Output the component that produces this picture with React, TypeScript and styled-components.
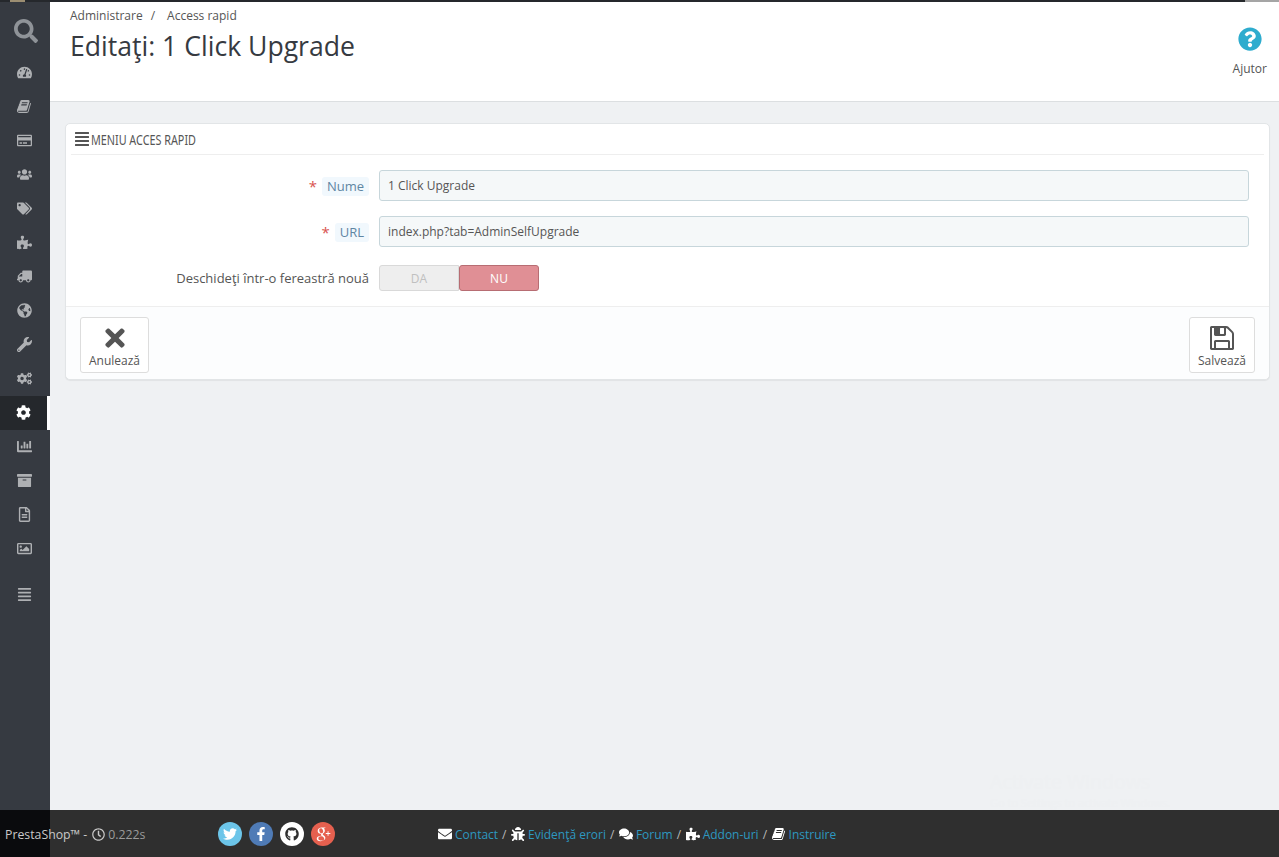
import React from "react";
import styled, { createGlobalStyle } from "styled-components";
import {
  FaSearch, FaTachometerAlt, FaRegCreditCard, FaUsers, FaTags, FaPuzzlePiece, FaTruck,
  FaGlobeAmericas, FaWrench, FaCogs, FaCog, FaChartBar, FaArchive, FaRegFileAlt, FaRegImage,
  FaAlignJustify, FaQuestionCircle, FaTimes, FaRegClock, FaTwitter, FaFacebookF,
  FaGithub, FaEnvelope, FaBug, FaComments,
} from "react-icons/fa";
import { TiSocialGooglePlus } from "react-icons/ti";

const Global = createGlobalStyle`
  html, body { margin: 0; padding: 0; height: 100%; overflow: hidden; }
  body { font-family: "Open Sans", "Liberation Sans", sans-serif; font-size: 12px; color: #555; background: #eff1f3; }
  #root { height: 100%; }
  * { box-sizing: border-box; }
`;

const BookIcon = () => (
  <svg viewBox="0 0 1792 1792" width="1em" height="1em" fill="currentColor">
    <path d="M1639 478q40 57 18 129l-275 906q-19 64-76.5 107.5t-122.5 43.5h-923q-77 0-148.5-53.5t-99.5-131.5q-24-67-2-127 0-4 3-27t4-37q1-8-3-21.5t-3-19.5q2-11 8-21t16.5-23.5 16.5-23.5q23-38 45-91.5t30-91.5q3-10 .5-30t-.5-28q3-11 17-28t17-23q21-36 42-92t25-90q1-9-2.5-32t.5-28q4-13 22-30.5t22-22.5q19-26 42.5-84.5t27.5-96.5q1-8-3-25.5t-2-26.5q2-8 9-18t18-23 17-21q8-12 16.5-30.5t15-35 16-36 19.5-32 26.5-23.5 36-11.5 47.5 5.5l-1 3q38-9 51-9h761q74 0 114 56t18 130l-274 906q-36 119-71.5 153.5t-128.5 34.5h-869q-27 0-38 15-11 16-1 43 24 70 144 70h923q29 0 56-15.5t35-41.5l300-987q7-22 5-57 38 15 59 43zm-1064 2q-4 13 2 22.5t20 9.5h608q13 0 25.5-9.5t16.5-22.5l21-64q4-13-2-22.5t-20-9.5h-608q-13 0-25.5 9.5t-16.5 22.5zm-83 256q-4 13 2 22.5t20 9.5h608q13 0 25.5-9.5t16.5-22.5l21-64q4-13-2-22.5t-20-9.5h-608q-13 0-25.5 9.5t-16.5 22.5z" />
  </svg>
);
const FloppyIcon = () => (
  <svg viewBox="0 0 1792 1792" width="1em" height="1em" fill="currentColor">
    <path d="M512 1536h768v-384h-768v384zm896 0h128v-896q0-14-10-38.5t-20-34.5l-281-281q-10-10-34-20t-39-10v416q0 40-28 68t-68 28h-576q-40 0-68-28t-28-68v-416h-128v1280h128v-416q0-40 28-68t68-28h832q40 0 68 28t28 68v416zm-384-928v-320q0-13-9.5-22.5t-22.5-9.5h-192q-13 0-22.5 9.5t-9.5 22.5v320q0 13 9.5 22.5t22.5 9.5h192q13 0 22.5-9.5t9.5-22.5zm640 32v928q0 40-28 68t-68 28h-1344q-40 0-68-28t-28-68v-1344q0-40 28-68t68-28h928q40 0 88 20t76 48l280 280q28 28 48 76t20 88z" />
  </svg>
);

const Page = styled.div`
  height: 857px; display: flex; flex-direction: column; position: relative;
`;
const TopStrip = styled.div`
  height: 2px; flex: none;
  background: linear-gradient(to right, #25282c 10px, #9c8e72 10px, #9c8e72 25px, #25282c 25px, #25282c 1245px, #a5a5a5 1245px);
`;
const Body = styled.div`
  flex: 1; display: flex; min-height: 0;
`;
const Sidebar = styled.nav`
  width: 50px; flex: none; background: #363a41; display: flex; flex-direction: column;
  padding-top: 12px;
`;
const SearchItem = styled.div`
  height: 34px; display: flex; align-items: center; justify-content: center; color: #8f9398;
  font-size: 24px; padding-left: 1px; margin-bottom: 8px;
`;
const NavItem = styled.div<{ $active?: boolean; $gap?: number; $flip?: boolean }>`
  height: 34px; display: flex; align-items: center; justify-content: center; font-size: 15px; padding: 0 1px 2px 0;
  margin-top: ${(p) => p.$gap ?? 0}px;
  color: ${(p) => (p.$active ? "#fff" : "#aeb0b3")};
  background: ${(p) => (p.$active ? "#25282c" : "transparent")};
  border-right: ${(p) => (p.$active ? "3px solid #fff" : "0")};
  svg { transform: ${(p) => (p.$flip ? "scaleX(-1)" : "none")}; }
`;
const Main = styled.main`
  flex: 1; display: flex; flex-direction: column; min-width: 0;
`;
const Header = styled.header`
  height: 100px; flex: none; background: #fff; border-bottom: 1px solid #dcdfe1; display: flex;
  justify-content: space-between; padding: 0 12px 0 20px;
`;
const Crumbs = styled.div`
  font-size: 12px; line-height: 15px; color: #555; padding-top: 6px; display: flex;
`;
const CrumbSep = styled.span`
  margin: 0 12px 0 8px;
`;
const Title = styled.h1`
  margin: 5px 0 0 0; font-size: 26.6px; line-height: 36px; font-weight: 400; color: #363a41;
`;
const Help = styled.div`
  display: flex; flex-direction: column; align-items: center; padding-top: 25px; font-size: 12px; color: #555;
  svg { font-size: 24px; color: #2eacce; margin-bottom: 9px; }
`;
const Content = styled.div`
  flex: 1; padding: 21px 9px 0 15px;
`;
const Panel = styled.section`
  background: #fff; border: 1px solid #e2e5e7; border-radius: 5px; box-shadow: 0 1px 1px rgba(0,0,0,.06);
  height: 257px; display: flex; flex-direction: column;
`;
const PanelHead = styled.div`
  height: 31px; margin: 0 5px; padding-left: 3px; border-bottom: 1px solid #eeeeee; display: flex; align-items: center;
  color: #555; svg { font-size: 16px; margin-right: 1px; flex: none; }
`;
const PanelTitle = styled.span`
  display: inline-block; font-size: 15px; transform: scaleX(.72); transform-origin: left center; white-space: nowrap;
  font-family: "Noto Sans", sans-serif;
`;
const Form = styled.div`
  flex: 1; padding-top: 15px; display: flex; flex-direction: column;
`;
const Row = styled.div<{ $h?: number; $top?: number }>`
  display: flex; height: ${(p) => p.$h ?? 31}px; margin: ${(p) => p.$top ?? 0}px 0 15px; align-items: center;
`;
const LabelCell = styled.div`
  width: 303px; flex: none; display: flex; justify-content: flex-end; align-items: center; color: #555; margin-right: 10px; font-size: 13px;
`;
const Req = styled.span`
  color: #d9534f; font-size: 15px; margin-right: 5px; line-height: 12px;
`;
const Chip = styled.span`
  background: #f1f8fd; color: #5f86a3; padding: 0 5px; border-radius: 3px; line-height: 19px; margin-top: 1px;
`;
const Input = styled.div`
  width: 870px; height: 31px; background: #f5f8f9; border: 1px solid #c7d6db; border-radius: 3px; padding: 0 8px;
  line-height: 29px; color: #555;
`;
const Switch = styled.div`
  width: 160px; height: 26px; display: flex; border-radius: 3px;
`;
const SwitchOff = styled.div`
  flex: 1; background: #eeeeee; color: #c0c0c0; border: 1px solid #d9d9d9; border-radius: 3px 0 0 3px;
  display: flex; align-items: center; justify-content: center;
`;
const SwitchOn = styled.div`
  flex: 1; background: #e08f95; color: #fff; border: 1px solid #b76d73; border-radius: 3px;
  display: flex; align-items: center; justify-content: center;
`;
const PanelFoot = styled.div`
  height: 73px; margin-top: auto; background: #fcfdfe; border-top: 1px solid #eeeeee; border-radius: 0 0 5px 5px;
  padding: 10px 14px 0 14px; display: flex; justify-content: space-between;
`;
const ActionBtn = styled.div<{ $w: number }>`
  width: ${(p) => p.$w}px; height: 56px; background: #fff; border: 1px solid #dddddd; border-radius: 3px;
  display: flex; flex-direction: column; align-items: center; color: #555; font-size: 12px; padding-top: 6px;
  svg { font-size: 28px; color: #555; height: 28px; margin-bottom: 1px; flex: none; }
  span { line-height: 15px; }
`;
const Footer = styled.footer`
  height: 47px; flex: none; display: flex; align-items: center; color: #c6c6c6; padding-top: 1px;
  background: linear-gradient(to right, #0a0b0d 50px, #2f2f2f 50px);
`;
const Version = styled.div`
  width: 218px; padding-left: 5px; display: flex; align-items: center; flex: none; color: #c9c9c9; font-size: 12.3px;
  svg { margin: 0 3px 0 5px; font-size: 13px; }
`;
const Muted = styled.span` color: #9b9b9b; `;
const Socials = styled.div`
  display: flex; gap: 7px; width: 220px; flex: none;
`;
const Social = styled.div<{ $bg: string; $fg?: string }>`
  width: 24px; height: 24px; border-radius: 50%; background: ${(p) => p.$bg}; color: ${(p) => p.$fg ?? "#fff"};
  display: flex; align-items: center; justify-content: center; font-size: 14px;
`;
const GoogleGlyph = styled(TiSocialGooglePlus)`
  font-size: 22px;
`;
const Links = styled.div`
  display: flex; align-items: center; color: #b9b9b9; white-space: nowrap;
`;
const FootLink = styled.a`
  color: #2d98c0; display: inline-flex; align-items: center;
  svg { color: #fff; font-size: 14px; margin-right: 3px; }
`;
const Slash = styled.span` margin: 0 4.5px 0 4px; `;
const Watermark = styled.div`
  position: absolute; left: 990px; top: 769px; color: #eef0f2; pointer-events: none; white-space: nowrap; font-size: 11px; line-height: 15px;
  b { display: block; font-size: 19.5px; font-weight: 400; line-height: 26px; }
`;

const navTop = [FaTachometerAlt, BookIcon, FaRegCreditCard, FaUsers, FaTags, FaPuzzlePiece, FaTruck, FaGlobeAmericas, FaWrench, FaCogs];
const navBottom = [FaChartBar, FaArchive, FaRegFileAlt, FaRegImage];

export default function App() {
  return (
    <Page>
      <Global />
      <TopStrip />
      <Body>
        <Sidebar>
          <SearchItem><FaSearch /></SearchItem>
          {navTop.map((I, i) => <NavItem key={i} $flip={I === FaTruck}><I /></NavItem>)}
          <NavItem $active><FaCog /></NavItem>
          {navBottom.map((I, i) => <NavItem key={i}><I /></NavItem>)}
          <NavItem $gap={12}><FaAlignJustify /></NavItem>
        </Sidebar>
        <Main>
          <Header>
            <div>
              <Crumbs>Administrare<CrumbSep>/</CrumbSep>Access rapid</Crumbs>
              <Title>Editaţi: 1 Click Upgrade</Title>
            </div>
            <Help><FaQuestionCircle />Ajutor</Help>
          </Header>
          <Content>
            <Panel>
              <PanelHead><FaAlignJustify /><PanelTitle>MENIU ACCES RAPID</PanelTitle></PanelHead>
              <Form>
                <Row>
                  <LabelCell><Req>*</Req><Chip>Nume</Chip></LabelCell>
                  <Input>1 Click Upgrade</Input>
                </Row>
                <Row>
                  <LabelCell><Req>*</Req><Chip>URL</Chip></LabelCell>
                  <Input>index.php?tab=AdminSelfUpgrade</Input>
                </Row>
                <Row $h={26} $top={3}>
                  <LabelCell>Deschideţi într-o fereastră nouă</LabelCell>
                  <Switch><SwitchOff>DA</SwitchOff><SwitchOn>NU</SwitchOn></Switch>
                </Row>
              </Form>
              <PanelFoot>
                <ActionBtn $w={69}><FaTimes /><span>Anulează</span></ActionBtn>
                <ActionBtn $w={66}><FloppyIcon /><span>Salvează</span></ActionBtn>
              </PanelFoot>
            </Panel>
          </Content>
        </Main>
      </Body>
      <Footer>
        <Version>PrestaShop™ -<FaRegClock /><Muted>0.222s</Muted></Version>
        <Socials>
          <Social $bg="#6cc5e9"><FaTwitter /></Social>
          <Social $bg="#4f7bb6"><FaFacebookF /></Social>
          <Social $bg="#fff" $fg="#2f2f2f"><FaGithub /></Social>
          <Social $bg="#e5604f"><GoogleGlyph /></Social>
        </Socials>
        <Links>
          <FootLink><FaEnvelope />Contact</FootLink><Slash>/</Slash>
          <FootLink><FaBug />Evidenţă erori</FootLink><Slash>/</Slash>
          <FootLink><FaComments />Forum</FootLink><Slash>/</Slash>
          <FootLink><FaPuzzlePiece />Addon-uri</FootLink><Slash>/</Slash>
          <FootLink><BookIcon />Instruire</FootLink>
        </Links>
      </Footer>
      <Watermark><b>Activate Windows</b>Go to Settings to activate Windows.</Watermark>
    </Page>
  );
}
